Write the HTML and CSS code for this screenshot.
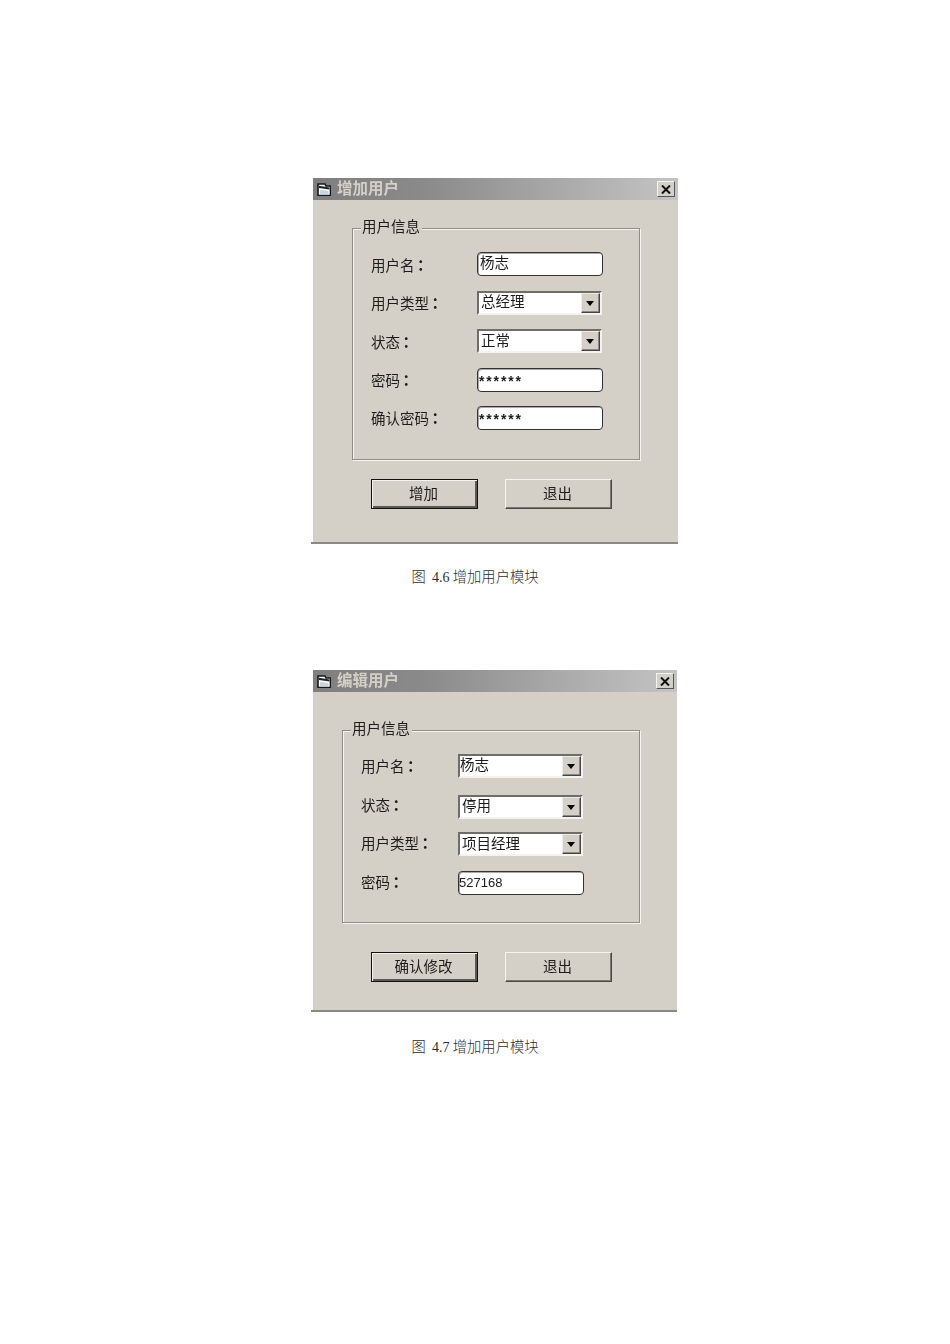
FILE: index.html
```html
<!DOCTYPE html>
<html lang="zh-CN">
<head>
<meta charset="utf-8">
<title>用户模块</title>
<link rel="stylesheet" href="styles.css">
</head>
<body>
<main class="page">
  <section class="figure figure-add">
    <div class="window">
      <div class="titlebar">
        <svg class="app-icon" viewBox="0 0 14 13"><path d="M1 1h7l1 2h4.500v9.500H1z" fill="#fff" stroke="#15181c" stroke-width="1.600"/><path d="M2 2.800l10.500 1.700v2L2 5z" fill="#1f2429"/><path d="M3 6.800l8.500 1.100v3H3z" fill="#c9d6e2"/></svg>
        <span class="title">增加用户</span>
        <span class="close"><svg viewBox="0 0 10 9"><path d="M1 0.500l8 8M9 0.500l-8 8" stroke="#111" stroke-width="2" fill="none"/></svg></span>
      </div>
      <div class="group">
        <span class="legend">用户信息</span>
        <div class="row"><span class="label">用户名<i class="colon">：</i></span><span class="field text">杨志</span></div>
        <div class="row"><span class="label">用户类型<i class="colon">：</i></span><span class="field combo"><span class="value">总经理</span><span class="arrow"></span></span></div>
        <div class="row"><span class="label">状态<i class="colon">：</i></span><span class="field combo"><span class="value">正常</span><span class="arrow"></span></span></div>
        <div class="row"><span class="label">密码<i class="colon">：</i></span><span class="field text mono stars">******</span></div>
        <div class="row"><span class="label">确认密码<i class="colon">：</i></span><span class="field text mono stars">******</span></div>
      </div>
      <div class="actions">
        <span class="btn default">增加</span>
        <span class="btn">退出</span>
      </div>
    </div>
    <div class="edge"></div>
    <p class="caption">图&nbsp; <span class="num">4.6</span> 增加用户模块</p>
  </section>

  <section class="figure figure-edit">
    <div class="window">
      <div class="titlebar">
        <svg class="app-icon" viewBox="0 0 14 13"><path d="M1 1h7l1 2h4.500v9.500H1z" fill="#fff" stroke="#15181c" stroke-width="1.600"/><path d="M2 2.800l10.500 1.700v2L2 5z" fill="#1f2429"/><path d="M3 6.800l8.500 1.100v3H3z" fill="#c9d6e2"/></svg>
        <span class="title">编辑用户</span>
        <span class="close"><svg viewBox="0 0 10 9"><path d="M1 0.500l8 8M9 0.500l-8 8" stroke="#111" stroke-width="2" fill="none"/></svg></span>
      </div>
      <div class="group">
        <span class="legend">用户信息</span>
        <div class="row"><span class="label">用户名<i class="colon">：</i></span><span class="field combo"><span class="value tight">杨志</span><span class="arrow"></span></span></div>
        <div class="row"><span class="label">状态<i class="colon">：</i></span><span class="field combo nudge-2"><span class="value">停用</span><span class="arrow"></span></span></div>
        <div class="row"><span class="label">用户类型<i class="colon">：</i></span><span class="field combo nudge-1"><span class="value">项目经理</span><span class="arrow"></span></span></div>
        <div class="row"><span class="label">密码<i class="colon">：</i></span><span class="field text mono nudge-1">527168</span></div>
      </div>
      <div class="actions">
        <span class="btn default">确认修改</span>
        <span class="btn">退出</span>
      </div>
    </div>
    <div class="edge"></div>
    <p class="caption">图&nbsp; <span class="num">4.7</span> 增加用户模块</p>
  </section>
</main>
</body>
</html>
```
FILE: styles.css
```css
* { box-sizing: border-box; }
html, body { margin: 0; background: #fff; }
body { font-family: "Noto Sans CJK SC", "Liberation Sans", sans-serif; color: #1c1c1c; }
.page { height: 1344px; padding-top: 178px; overflow: hidden; }
.figure-edit { margin-top: 85px; }

.window { margin-left: 313px; width: 365px; background: #d4d0c8; filter: blur(0.4px); }
.figure-edit .window { width: 364px; }
.edge { margin-left: 311px; width: 367px; height: 2px; background: #8b8984; }
.figure-edit .edge { width: 366px; }

.titlebar { height: 22px; display: flex; align-items: center; padding: 0 3px 0 4px; background: linear-gradient(90deg, #7f7f7f 0%, #8a8a8a 30%, #c4c4c4 100%); }
.app-icon { width: 14px; height: 13px; flex: none; }
.title { margin: -4px 0 0 6px; font-size: 15.500px; font-weight: 700; color: #d4d0c8; line-height: 22px; }
.close { margin-left: auto; width: 18px; height: 16px; display: flex; align-items: center; justify-content: center; background: #d4d0c8; border: 1px solid; border-color: #f4f3ef #555 #555 #f4f3ef; }
.close svg { width: 10px; height: 9px; }

.group { position: relative; margin: 28px 0 0 39px; width: 288px; height: 232px; padding: 23px 0 0 18px; display: flex; flex-direction: column; gap: 14.500px; border: 1px solid #8e8c87; box-shadow: 1px 1px 0 #f6f5f1, inset 1px 1px 0 #f6f5f1; }
.figure-edit .group { margin: 38px 0 0 29px; width: 298px; height: 193px; }
.legend { position: absolute; left: 8px; top: -12px; padding: 0 2px 0 1px; background: #d4d0c8; font-size: 14.500px; line-height: 18px; }

.row { height: 24px; display: flex; align-items: center; }
.label { width: 106px; flex: none; font-size: 14.500px; line-height: 24px; }
.figure-edit .label { width: 97px; }
.figure-add .row:nth-child(-n+4) .label { margin-top: 1px; }
.colon { display: inline-block; margin-left: -1px; font-style: normal; font-family: "Noto Sans CJK TC", sans-serif; font-weight: 700; }

.field { display: flex; height: 24px; width: 126px; background: #fff; font-size: 14.500px; }
.text { align-items: center; padding: 0 0 6px 2px; border: 1px solid #333; border-radius: 4px; box-shadow: 1px 1px 0 #aaa inset; }
.mono { font-family: "Liberation Sans", sans-serif; font-size: 13px; padding: 0; }
.stars { padding: 2px 0 0 1px; letter-spacing: 1.850px; font-size: 14px; font-weight: 700; }
.combo { width: 125px; align-items: center; justify-content: space-between; border: 2px solid; border-color: #6f6d69 #f4f3ef #f4f3ef #6f6d69; }
.value { padding: 0 0 4px 2px; }
.tight { padding: 0 0 6px 0; }
.arrow { position: relative; width: 19px; height: 20px; background: #d4d0c8; border: 1px solid; border-color: #eeece7 #444 #444 #eeece7; box-shadow: inset -1px -1px 0 #8a8883; }
.arrow::after { content: ""; position: absolute; left: 4px; top: 7px; border: 4px solid transparent; border-top: 5px solid #000; border-bottom: 0; }
.nudge-2 { margin-top: 4px; }
.nudge-1 { margin-top: 2px; }

.actions { display: flex; gap: 27px; margin: 19px 0 0 58px; padding-bottom: 33px; }
.figure-edit .actions { margin-top: 29px; padding-bottom: 28px; }
.btn { width: 107px; height: 30px; display: flex; align-items: center; justify-content: center; padding: 0 2px 3px 0; font-size: 14.500px; background: #d4d0c8; border: 1px solid; border-color: #f4f3ef #4a4946 #4a4946 #f4f3ef; box-shadow: inset -1px -1px 0 #7a7873; }
.default { border: 1px solid #111; box-shadow: inset 1px 1px 0 #f4f3ef, inset -2px -2px 0 #5a5955; }

.caption { margin: 23px 0 0; height: 18px; line-height: 18px; text-align: center; font-size: 14.300px; font-weight: 300; color: #2e2e2e; }
.figure-edit .caption { margin-top: 25px; }
.num { font-family: "Liberation Serif", serif; font-size: 14px; }
```
